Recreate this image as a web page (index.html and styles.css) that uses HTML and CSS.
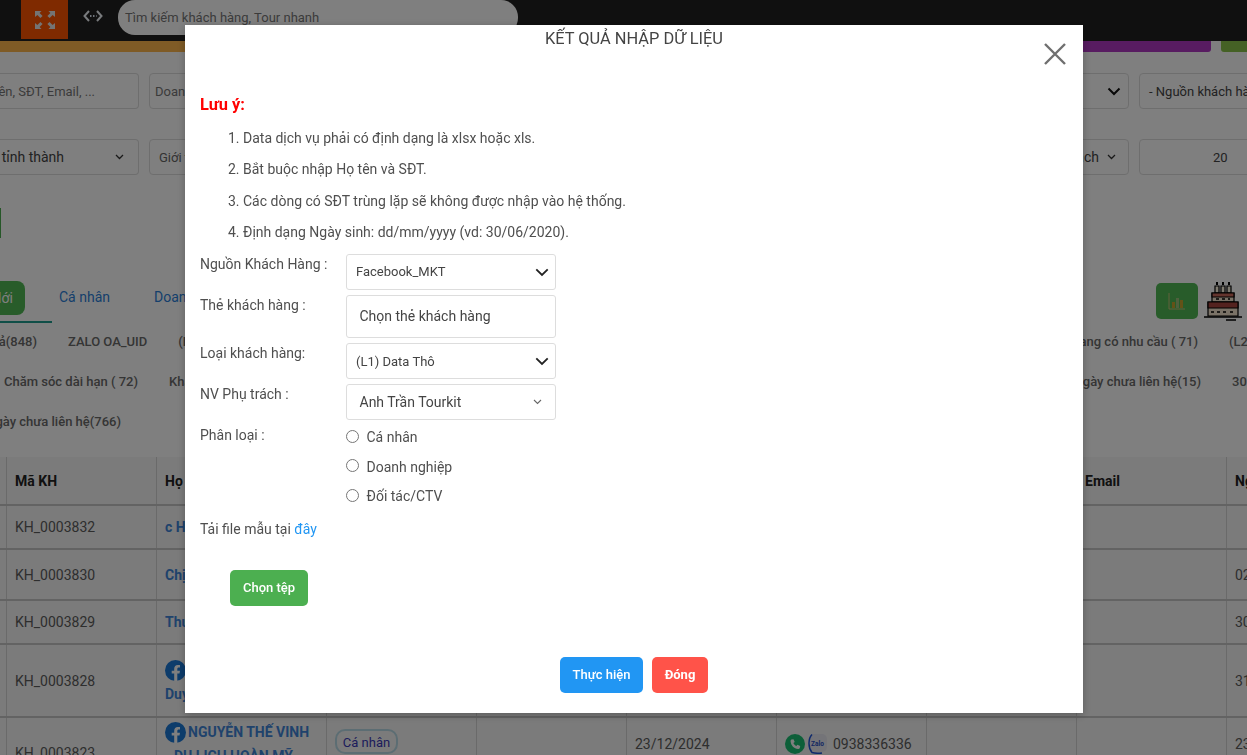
FILE: index.html
```html
<!DOCTYPE html>
<html lang="vi">
<head>
<meta charset="utf-8">
<title>Kết quả nhập dữ liệu</title>
<link rel="stylesheet" href="styles.css">
</head>
<body>
<div class="page">
  <header class="topbar">
    <button class="fullscreen" type="button" aria-label="Toàn màn hình">
      <svg width="22" height="20" viewBox="0 0 22 20" fill="#e8e8e8"><path d="M1 1h6.500L5.600 3l3 3-2.200 2-3-3L1 7zM21 1h-6.500l1.900 2-3 3 2.200 2 3-3L21 7zM1 19h6.500l-1.900-2 3-3-2.200-2-3 3L1 13zM21 19h-6.500l1.900-2-3-3 2.200-2 3 3 2.400-2z"/></svg>
    </button>
    <svg class="swap" width="20" height="12" viewBox="0 0 20 12" fill="none" stroke="#f2f6fb" stroke-width="2"><path d="M6 1 1.500 6 6 11M14 1l4.500 5L14 11"/><path d="M7 6h1.500M10 6h1.500M13 6h.6" stroke="#dfe9f5"/></svg>
    <div class="search">Tìm kiếm khách hàng, Tour nhanh</div>
  </header>

  <div class="colorbar">
    <span class="bar bar-orange"></span>
    <span class="bar bar-purple"></span>
    <span class="bar bar-green"></span>
  </div>

  <div class="filter-row filter-row-a">
    <div class="ctl ctl-first"><span class="ph">Họ tên, SĐT, Email, ...</span></div>
    <div class="ctl ctl-mid">
      <span class="ph">Doanh nghiệp</span>
      <svg class="chev-b" width="14" height="9" viewBox="0 0 14 9" fill="none" stroke="#111" stroke-width="2"><path d="m1.500 1.500 5.500 5.500 5.500-5.500"/></svg>
    </div>
    <div class="ctl ctl-last"><span class="val">- Nguồn khách hàng</span></div>
  </div>
  <div class="filter-row filter-row-b">
    <div class="ctl ctl-first ctl-city">
      <span class="val">- Chọn tỉnh thành</span>
      <svg class="chev-s" width="9" height="6" viewBox="0 0 9 6" fill="none" stroke="#333" stroke-width="1.300"><path d="m1 1 3.500 3.500L8 1"/></svg>
    </div>
    <div class="ctl ctl-mid">
      <span class="val val-gender">Giới tính</span>
      <span class="mid-end">
        <span class="val">Nhân viên phụ trách</span>
        <svg class="chev-s" width="9" height="6" viewBox="0 0 9 6" fill="none" stroke="#333" stroke-width="1.300"><path d="m1 1 3.500 3.500L8 1"/></svg>
      </span>
    </div>
    <div class="ctl ctl-last ctl-num"><span class="val">20</span></div>
  </div>

  <div class="action-row"><span class="action-btn"></span></div>

  <div class="tabs-row">
    <div class="tabs">
      <span class="tab-active"><span>Mới</span></span>
      <span class="tab tab-one">Cá nhân</span>
      <span class="tab">Doanh nghiệp</span>
    </div>
    <div class="tools">
      <span class="chart-btn">
        <svg width="18" height="18" viewBox="0 0 18 18"><path d="M1 1v16h16" fill="none" stroke="#c7c27a" stroke-width="1"/><path d="M4 10h3v6H4z" fill="#c9a52e"/><path d="M8 6h3v10H8z" fill="#9dc07a"/><path d="M12 8h3v8h-3z" fill="#c9a52e"/></svg>
      </span>
      <svg class="cake" width="38" height="40" viewBox="0 0 38 40">
        <g stroke="#000" stroke-width="1.200">
          <path d="M11 5h4v7h-4zM17 5h4v7h-4zM23 5h4v7h-4z" fill="#fff6e0"/>
          <path d="M13 1v3M19 1v3M25 1v3" stroke-width="2"/>
          <path d="M8 12h22v9H8z" fill="#f5e4cf"/>
          <path d="M8 12h22v4H8z" fill="#c8685a"/>
          <path d="M4 21h30v14H4z" fill="#f5e4cf"/>
          <path d="M4 21h30v6H4z" fill="#a8443e"/>
          <path d="M0 36h38" stroke-width="1.500"/>
          <path d="M12 18h3M18 18h3M24 18h2M7 31h3M13 31h3M19 31h3M26 31h3" stroke-width="1.500"/>
          <path d="M22 39h10" stroke-width="1.500"/>
        </g>
      </svg>
    </div>
  </div>

  <div class="chips chips-a">
    <div class="chip-group">
      <span class="chip chip-cut chip-cut-a"><span>Tất cả(848)</span></span>
      <span class="chip">ZALO OA_UID</span>
      <span class="chip">(L1) Data Thô</span>
    </div>
    <div class="chip-group">
      <span class="chip">Đang có nhu cầu ( 71)</span>
      <span class="chip chip-end">(L2) Tiềm năng</span>
    </div>
  </div>
  <div class="chips chips-b">
    <div class="chip-group">
      <span class="chip chip-cut chip-cut-b"><span>Chăm sóc dài hạn ( 72)</span></span>
      <span class="chip">Khách hàng cũ</span>
    </div>
    <div class="chip-group">
      <span class="chip">15 ngày chưa liên hệ(15)</span>
      <span class="chip chip-end chip-end-b">30 ngày</span>
    </div>
  </div>
  <div class="chips chips-c">
    <div class="chip-group">
      <span class="chip chip-cut chip-cut-c"><span>60 ngày chưa liên hệ(766)</span></span>
    </div>
  </div>

  <table class="grid">
    <colgroup>
      <col class="c-0"><col class="c-1"><col class="c-2"><col class="c-1"><col class="c-1"><col class="c-1"><col class="c-1"><col class="c-1"><col class="c-1"><col class="c-1">
    </colgroup>
    <thead>
      <tr class="r-head"><th></th><th>Mã KH</th><th>Họ tên</th><th></th><th></th><th></th><th></th><th></th><th>Email</th><th>Ngày sinh</th></tr>
    </thead>
    <tbody>
      <tr class="r-a"><td></td><td>KH_0003832</td><td class="name">c Hương</td><td></td><td></td><td></td><td></td><td></td><td></td><td></td></tr>
      <tr class="r-b"><td></td><td>KH_0003830</td><td class="name">Chị Hà</td><td></td><td></td><td></td><td></td><td></td><td></td><td>02/01/1990</td></tr>
      <tr class="r-a"><td></td><td>KH_0003829</td><td class="name">Thu Trang</td><td></td><td></td><td></td><td></td><td></td><td></td><td>30/04/1988</td></tr>
      <tr class="r-c"><td></td><td>KH_0003828</td>
        <td class="name name-top">
          <svg class="fb" width="21" height="21" viewBox="0 0 21 21"><circle cx="10.500" cy="10.500" r="10.500" fill="#1a78d6"/><path d="M14.500 13.500 15 10.700h-2.700V9c0-.8.400-1.500 1.600-1.500H15V5.100s-1.100-.2-2.200-.2c-2.200 0-3.600 1.300-3.600 3.800v2H6.700v2.800h2.500V21h3.100v-7.500z" fill="#fff"/></svg>
          <div class="name-line">Duy Anh</div>
        </td><td></td><td></td><td></td><td></td><td></td><td></td><td>31/12/1985</td></tr>
      <tr class="r-d"><td></td><td>KH_0003823</td>
        <td class="name name-top">
          <div class="name-first"><svg class="fb" width="21" height="21" viewBox="0 0 21 21"><circle cx="10.500" cy="10.500" r="10.500" fill="#1a78d6"/><path d="M14.500 13.500 15 10.700h-2.700V9c0-.8.400-1.500 1.600-1.500H15V5.100s-1.100-.2-2.200-.2c-2.200 0-3.600 1.300-3.600 3.800v2H6.700v2.800h2.500V21h3.100v-7.500z" fill="#fff"/></svg>NGUYỄN THẾ VINH</div>
          <div class="name-line">- DU LỊCH HOÀN MỸ</div>
        </td>
        <td class="cell-top"><span class="badge">Cá nhân</span></td><td></td><td class="cell-top cell-text">23/12/2024</td>
        <td class="cell-top"><span class="phone">
          <svg width="20" height="20" viewBox="0 0 20 20"><circle cx="10" cy="10" r="10" fill="#1bbf73"/><path d="M6 4.800 8 4.400l1.200 2.800-1.300 1c.6 1.400 1.600 2.400 3 3.100l1-1.300 2.800 1.200-.4 2.100c-.3.700-1 1-1.700.9C8.300 13.700 5.700 10.800 5.100 6.600c-.1-.8.300-1.500.9-1.800z" fill="#fff" transform="translate(0.500 .8)"/></svg>
          <svg class="zalo" width="19" height="20" viewBox="0 0 19 20"><rect x="1" y="0" width="18" height="18" rx="5" fill="#e8e8f0"/><path d="M4 .5C.5 4-.5 13 4 18.500c3 .9 6 1 10 .5" fill="none" stroke="#1f55d8" stroke-width="1.500"/><text x="3" y="11.500" class="zalo-text">Zalo</text></svg>
          <span>0938336336</span>
        </span></td><td></td><td></td><td class="cell-top cell-text">23/12/1980</td></tr>
    </tbody>
  </table>
</div>

<div class="overlay"></div>

<section class="modal" role="dialog" aria-labelledby="modal-title">
  <h2 class="modal-title" id="modal-title">KẾT QUẢ NHẬP DỮ LIỆU</h2>
  <button class="close" type="button" aria-label="Đóng">
    <svg width="24" height="24" viewBox="0 0 24 24" fill="none" stroke="#6f6f6f" stroke-width="2.400"><path d="m2 2 20 20M22 2 2 22"/></svg>
  </button>

  <h3 class="note-title">Lưu ý:</h3>
  <ol class="notes">
    <li>Data dịch vụ phải có định dạng là xlsx hoặc xls.</li>
    <li>Bắt buộc nhập Họ tên và SĐT.</li>
    <li>Các dòng có SĐT trùng lặp sẽ không được nhập vào hệ thống.</li>
    <li>Định dạng Ngày sinh: dd/mm/yyyy (vd: 30/06/2020).</li>
  </ol>

  <div class="fields">
    <div class="field">
      <label class="field-label">Nguồn Khách Hàng :</label>
      <div class="select select-small select-raised">
        <span>Facebook_MKT</span>
        <svg width="14" height="9" viewBox="0 0 14 9" fill="none" stroke="#222" stroke-width="1.800"><path d="m1.300 1.300 5.700 5.700 5.700-5.700"/></svg>
      </div>
    </div>
    <div class="field">
      <label class="field-label">Thẻ khách hàng :</label>
      <div class="select select-tall"><span>Chọn thẻ khách hàng</span></div>
    </div>
    <div class="field">
      <label class="field-label">Loại khách hàng:</label>
      <div class="select select-small">
        <span>(L1) Data Thô</span>
        <svg width="14" height="9" viewBox="0 0 14 9" fill="none" stroke="#222" stroke-width="1.800"><path d="m1.300 1.300 5.700 5.700 5.700-5.700"/></svg>
      </div>
    </div>
    <div class="field">
      <label class="field-label">NV Phụ trách :</label>
      <div class="select select-plain">
        <span>Anh Trần Tourkit</span>
        <svg width="9" height="6" viewBox="0 0 9 6" fill="none" stroke="#666" stroke-width="1.100"><path d="m1 1 3.500 3.500L8 1"/></svg>
      </div>
    </div>
    <div class="field field-radio">
      <span class="field-label">Phân loại :</span>
      <div class="radios">
        <label class="radio"><input type="radio" name="kind"><span>Cá nhân</span></label>
        <label class="radio"><input type="radio" name="kind"><span>Doanh nghiệp</span></label>
        <label class="radio"><input type="radio" name="kind"><span>Đối tác/CTV</span></label>
      </div>
    </div>
  </div>

  <p class="sample">Tải file mẫu tại <a href="#">đây</a></p>
  <button class="btn btn-file" type="button">Chọn tệp</button>
  <footer class="modal-foot">
    <button class="btn btn-run" type="button">Thực hiện</button>
    <button class="btn btn-close" type="button">Đóng</button>
  </footer>
</section>
</body>
</html>
```

FILE: styles.css
```css
* { box-sizing: border-box; }
html, body { margin: 0; height: 755px; overflow: hidden; }
body { font-family: Roboto, "Noto Sans", sans-serif; font-size: 14px; color: #5c5c5c; background: #fff; }
svg { flex: none; }

.page { width: 1247px; height: 755px; overflow: hidden; }

/* top bar */
.topbar { height: 41px; background: #212121; display: flex; align-items: flex-start; }
.fullscreen { width: 47px; height: 39px; margin-left: 21px; background: #ff5500; border: 0; padding: 0; display: flex; align-items: center; justify-content: center; }
.swap { margin: 10px 0 0 15px; }
.search { width: 400px; height: 35px; margin-left: 15px; background: #fff; border-radius: 17px; padding: 10px 7px 0; font-size: 13px; line-height: 16px; color: #777; }

.colorbar { display: flex; gap: 10px; height: 11px; }
.bar { display: block; border-radius: 0 0 3px 3px; }
.bar-orange { flex: 1; background: #ffb74d; border-radius: 0; }
.bar-purple { flex: 1; background: #b039c3; }
.bar-green { width: 40px; flex: none; background: #8bc34a; margin-right: -14px; }

/* filter rows */
.filter-row { display: flex; height: 36px; gap: 10px; font-size: 13px; }
.filter-row-a { margin-top: 21px; }
.filter-row-b { margin-top: 30px; }
.ctl { border: 1px solid #ddd; border-radius: 4px; height: 36px; display: flex; align-items: center; white-space: nowrap; color: #555; overflow: hidden; }
.ctl-first { width: 139px; flex: none; justify-content: flex-end; padding-right: 43px; border-left: 0; border-radius: 0 4px 4px 0; }
.ctl-city { padding-right: 14px; gap: 51px; font-size: 14px; }
.ctl-mid { flex: 1; padding: 0 7px 0 5px; justify-content: space-between; }
.filter-row-b .ctl-mid { padding: 0 12px 0 9px; }
.mid-end { display: flex; align-items: center; gap: 8px; font-size: 14px; }
.ctl-last { width: 190px; flex: none; padding-left: 9px; margin-right: -82px; }
.ctl-num { width: 162px; padding: 0 0 0 73px; margin-right: -54px; }
.ph { color: #777; }
.val { color: #444; }
.val-gender { color: #666; }

.action-row { height: 30px; margin-top: 33px; }
.action-btn { display: block; width: 1px; height: 30px; background: #4caf50; }

/* tabs */
.tabs-row { display: flex; justify-content: space-between; margin-top: 43px; height: 42px; }
.tabs { display: flex; align-items: flex-start; height: 42px; }
.tab-active { width: 52px; height: 42px; border-bottom: 2px solid #1f9d8f; display: block; }
.tab-active span { display: flex; justify-content: flex-end; align-items: center; width: 25px; height: 34px; background: #50b854; color: #fff; border-radius: 0 8px 8px 0; padding-right: 12px; font-size: 14px; overflow: hidden; white-space: nowrap; }
.tab { color: #2b7fd8; line-height: 32px; margin-left: 44px; white-space: nowrap; }
.tab-one { margin-left: 7px; }
.tools { display: flex; align-items: flex-start; gap: 6px; padding-right: 5px; }
.chart-btn { width: 42px; height: 36px; margin-top: 2px; background: #50b854; border-radius: 5px; display: flex; align-items: center; justify-content: center; }
.cake { display: block; }

/* chips */
.chips { display: flex; justify-content: space-between; height: 20px; align-items: center; font-size: 13px; font-weight: 500; color: #6a6a6a; white-space: nowrap; }
.chips-a { margin-top: 8px; }
.chips-b { margin-top: 20px; }
.chips-c { margin-top: 20px; }
.chip-group { display: flex; gap: 31px; }
.chip-cut { display: flex; justify-content: flex-end; overflow: hidden; }
.chip-cut-a { width: 37px; }
.chip-cut-b { width: 138px; }
.chip-cut-c { width: 121px; }
.chip-end { width: 18px; }
.chip-end-b { width: 15px; }

/* table */
.grid { border-collapse: collapse; table-layout: fixed; width: 1376px; margin-top: 26px; background: #f6f6f6; }
.c-0 { width: 6px; }
.c-1 { width: 150px; }
.c-2 { width: 170px; }
.grid th, .grid td { border-right: 1px solid #d4d4d4; border-bottom: 2px solid #c6c6c6; padding: 0 8px 0 8.500px; text-align: left; vertical-align: middle; white-space: nowrap; overflow: hidden; }
.grid th:first-child, .grid td:first-child { padding: 0; }
.grid th { font-weight: 700; color: #222; }
.r-head { height: 48px; }
.r-a { height: 44px; }
.r-b { height: 51px; }
.r-c { height: 73px; }
.r-d { height: 72px; }
.grid .name { font-weight: 700; color: #3f85d8; }
.grid .name-top { vertical-align: top; padding-top: 4px; }
.grid .cell-top { vertical-align: top; }
.grid .cell-text { padding-top: 18px; }
.r-d .name-top { white-space: normal; }
.name-first { display: flex; align-items: center; gap: 2px; height: 21px; line-height: 21px; white-space: nowrap; }
.grid .r-c .name-top { padding-top: 15px; }
.name-line { margin-top: 4px; line-height: 18px; white-space: nowrap; }
.fb { display: block; flex: none; }
.badge { display: inline-block; width: 63px; padding: 3px 0 1px; text-align: center; border: 2px solid #b8dbe6; border-radius: 10px; color: #3a3ab8; font-size: 13px; line-height: 17px; margin-top: 11px; }
.phone { display: flex; align-items: center; margin-top: 16px; font-size: 14px; }
.zalo { margin: 0 6px 0 3px; }
.zalo-text { font-family: Roboto, sans-serif; font-size: 6.500px; font-weight: 700; fill: #2a4fc4; }

/* overlay + modal */
.overlay { position: fixed; inset: 0; background: rgba(0, 0, 0, .5); }
.modal { position: fixed; left: 185px; top: 25px; width: 898px; height: 688px; background: #fff; padding: 1px 15px 0; color: #4f4f4f; font-size: 14px; box-shadow: 0 2px 8px rgba(0,0,0,.25); }
.modal-title { margin: 0; font-size: 16.400px; font-weight: 400; line-height: 26px; text-align: center; color: #444; }
.close { position: absolute; right: 16px; top: 17px; padding: 0; border: 0; background: none; display: block; line-height: 0; }
.note-title { margin: 42px 0 0; font-size: 16.400px; font-weight: 700; line-height: 22px; color: #f00; }
.notes { margin: 7px 0 0; padding: 0 0 0 43px; }
.notes li { line-height: 31.300px; }

.fields { margin-top: 6px; display: flex; flex-direction: column; gap: 5px; }
.field { display: grid; grid-template-columns: 146px 210px; align-items: start; }
.field-label { line-height: 20px; }
.select { height: 36px; border: 1px solid #ddd; border-radius: 3px; display: flex; align-items: center; justify-content: space-between; padding: 0 6px 0 12.500px; color: #444; }
.select-small { padding-left: 9px; font-size: 13px; }
.select-raised span { margin-bottom: 1px; }
.select-tall { height: 43px; padding-bottom: 2px; }
.select-plain { padding-right: 13px; }
.radios { display: flex; flex-direction: column; margin-top: -2.700px; margin-bottom: -.3px; }
.radio { display: flex; align-items: center; height: 29.500px; }
.radio input { width: 13px; height: 13px; margin: 0 7.500px 0 0; transform: translateY(-1px); }

.sample { margin: 8px 0 0; line-height: 20px; }
.sample a { color: #2196f3; text-decoration: none; }

.btn { height: 36px; border: 0; border-radius: 5px; color: #fff; font: 500 13px/36px Roboto, sans-serif; padding: 0; display: block; }
.btn-file { width: 78px; margin: 31px 0 0 30px; background: #4caf50; }
.modal-foot { display: flex; justify-content: center; gap: 9px; margin-top: 51px; }
.btn-run { width: 83px; background: #2196f3; }
.btn-close { width: 56px; background: #ff5349; font-weight: 700; }
```
